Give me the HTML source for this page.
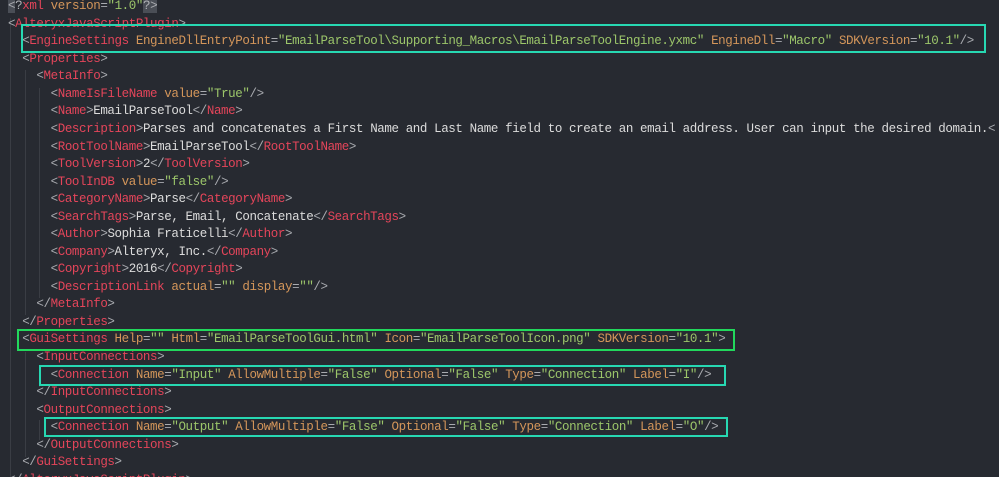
<!DOCTYPE html>
<html><head><meta charset="utf-8"><style>
html,body{margin:0;padding:0;background:#272a31;width:999px;height:477px;overflow:hidden}
#c{position:relative;width:999px;height:477px;font-family:"Liberation Mono",monospace;font-size:12.5px;letter-spacing:-0.4px;color:#dcdcdc}
.l{position:absolute;left:8px;height:17.54px;line-height:17.54px;white-space:pre}
.b{color:#a9abb0}.t{color:#e4455a}.a{color:#d4965a}.v{color:#9cc66a}.e{color:#b0b2b6}
.hl{background:#4a4e56}
.g{position:absolute;width:1px;background:#3a3d44}
.box{position:absolute;box-sizing:border-box;border:2px solid #27d8b2}
.gb{border-color:#22d85c}
</style></head><body><div id="c">
<div class="g" style="left:10px;top:18px;height:460px"></div>
<div class="g" style="left:25px;top:70px;height:245px"></div>
<div class="g" style="left:39px;top:88px;height:210px"></div>
<div class="g" style="left:25px;top:352px;height:105px"></div>
<div class="g" style="left:39px;top:367px;height:20px"></div>
<div class="g" style="left:39px;top:420px;height:20px"></div>

<div class="l" style="top:-1.8px"><span class="b hl">&lt;</span><span class="e">?</span><span class="t">xml</span> <span class="a">version</span><span class="b">=</span><span class="v">"1.0"</span><span class="hl"><span class="e">?</span><span class="b">&gt;</span></span></div>
<div class="l" style="top:15.7px"><span class="b">&lt;</span><span class="t">AlteryxJavaScriptPlugin</span><span class="b">&gt;</span></div>
<div class="l" style="top:33.3px">  <span class="b">&lt;</span><span class="t">EngineSettings</span> <span class="a">EngineDllEntryPoint</span><span class="b">=</span><span class="v">"EmailParseTool\Supporting_Macros\EmailParseToolEngine.yxmc"</span> <span class="a">EngineDll</span><span class="b">=</span><span class="v">"Macro"</span> <span class="a">SDKVersion</span><span class="b">=</span><span class="v">"10.1"</span><span class="b">/&gt;</span></div>
<div class="l" style="top:50.8px">  <span class="b">&lt;</span><span class="t">Properties</span><span class="b">&gt;</span></div>
<div class="l" style="top:68.4px">    <span class="b">&lt;</span><span class="t">MetaInfo</span><span class="b">&gt;</span></div>
<div class="l" style="top:85.9px">      <span class="b">&lt;</span><span class="t">NameIsFileName</span> <span class="a">value</span><span class="b">=</span><span class="v">"True"</span><span class="b">/&gt;</span></div>
<div class="l" style="top:103.4px">      <span class="b">&lt;</span><span class="t">Name</span><span class="b">&gt;</span>EmailParseTool<span class="b">&lt;/</span><span class="t">Name</span><span class="b">&gt;</span></div>
<div class="l" style="top:121px">      <span class="b">&lt;</span><span class="t">Description</span><span class="b">&gt;</span>Parses and concatenates a First Name and Last Name field to create an email address. User can input the desired domain.<span class="b">&lt;</span></div>
<div class="l" style="top:138.5px">      <span class="b">&lt;</span><span class="t">RootToolName</span><span class="b">&gt;</span>EmailParseTool<span class="b">&lt;/</span><span class="t">RootToolName</span><span class="b">&gt;</span></div>
<div class="l" style="top:156px">      <span class="b">&lt;</span><span class="t">ToolVersion</span><span class="b">&gt;</span>2<span class="b">&lt;/</span><span class="t">ToolVersion</span><span class="b">&gt;</span></div>
<div class="l" style="top:173.6px">      <span class="b">&lt;</span><span class="t">ToolInDB</span> <span class="a">value</span><span class="b">=</span><span class="v">"false"</span><span class="b">/&gt;</span></div>
<div class="l" style="top:191.1px">      <span class="b">&lt;</span><span class="t">CategoryName</span><span class="b">&gt;</span>Parse<span class="b">&lt;/</span><span class="t">CategoryName</span><span class="b">&gt;</span></div>
<div class="l" style="top:208.7px">      <span class="b">&lt;</span><span class="t">SearchTags</span><span class="b">&gt;</span>Parse, Email, Concatenate<span class="b">&lt;/</span><span class="t">SearchTags</span><span class="b">&gt;</span></div>
<div class="l" style="top:226.2px">      <span class="b">&lt;</span><span class="t">Author</span><span class="b">&gt;</span>Sophia Fraticelli<span class="b">&lt;/</span><span class="t">Author</span><span class="b">&gt;</span></div>
<div class="l" style="top:243.7px">      <span class="b">&lt;</span><span class="t">Company</span><span class="b">&gt;</span>Alteryx, Inc.<span class="b">&lt;/</span><span class="t">Company</span><span class="b">&gt;</span></div>
<div class="l" style="top:261.3px">      <span class="b">&lt;</span><span class="t">Copyright</span><span class="b">&gt;</span>2016<span class="b">&lt;/</span><span class="t">Copyright</span><span class="b">&gt;</span></div>
<div class="l" style="top:278.8px">      <span class="b">&lt;</span><span class="t">DescriptionLink</span> <span class="a">actual</span><span class="b">=</span><span class="v">""</span> <span class="a">display</span><span class="b">=</span><span class="v">""</span><span class="b">/&gt;</span></div>
<div class="l" style="top:296.3px">    <span class="b">&lt;/</span><span class="t">MetaInfo</span><span class="b">&gt;</span></div>
<div class="l" style="top:313.9px">  <span class="b">&lt;/</span><span class="t">Properties</span><span class="b">&gt;</span></div>
<div class="l" style="top:331.4px">  <span class="b">&lt;</span><span class="t">GuiSettings</span> <span class="a">Help</span><span class="b">=</span><span class="v">""</span> <span class="a">Html</span><span class="b">=</span><span class="v">"EmailParseToolGui.html"</span> <span class="a">Icon</span><span class="b">=</span><span class="v">"EmailParseToolIcon.png"</span> <span class="a">SDKVersion</span><span class="b">=</span><span class="v">"10.1"</span><span class="b">&gt;</span></div>
<div class="l" style="top:349px">    <span class="b">&lt;</span><span class="t">InputConnections</span><span class="b">&gt;</span></div>
<div class="l" style="top:366.5px">      <span class="b">&lt;</span><span class="t">Connection</span> <span class="a">Name</span><span class="b">=</span><span class="v">"Input"</span> <span class="a">AllowMultiple</span><span class="b">=</span><span class="v">"False"</span> <span class="a">Optional</span><span class="b">=</span><span class="v">"False"</span> <span class="a">Type</span><span class="b">=</span><span class="v">"Connection"</span> <span class="a">Label</span><span class="b">=</span><span class="v">"I"</span><span class="b">/&gt;</span></div>
<div class="l" style="top:384px">    <span class="b">&lt;/</span><span class="t">InputConnections</span><span class="b">&gt;</span></div>
<div class="l" style="top:401.6px">    <span class="b">&lt;</span><span class="t">OutputConnections</span><span class="b">&gt;</span></div>
<div class="l" style="top:419.1px">      <span class="b">&lt;</span><span class="t">Connection</span> <span class="a">Name</span><span class="b">=</span><span class="v">"Output"</span> <span class="a">AllowMultiple</span><span class="b">=</span><span class="v">"False"</span> <span class="a">Optional</span><span class="b">=</span><span class="v">"False"</span> <span class="a">Type</span><span class="b">=</span><span class="v">"Connection"</span> <span class="a">Label</span><span class="b">=</span><span class="v">"O"</span><span class="b">/&gt;</span></div>
<div class="l" style="top:436.6px">    <span class="b">&lt;/</span><span class="t">OutputConnections</span><span class="b">&gt;</span></div>
<div class="l" style="top:454.2px">  <span class="b">&lt;/</span><span class="t">GuiSettings</span><span class="b">&gt;</span></div>
<div class="l" style="top:471.7px"><span class="b">&lt;/</span><span class="t">AlteryxJavaScriptPlugin</span><span class="b">&gt;</span></div>

<div class="box" style="left:21px;top:24px;width:965px;height:29px"></div>
<div class="box gb" style="left:17px;top:329px;width:718px;height:22px"></div>
<div class="box" style="left:39px;top:365px;width:687px;height:21px"></div>
<div class="box" style="left:44px;top:417px;width:684px;height:20px"></div>
</div></body></html>
